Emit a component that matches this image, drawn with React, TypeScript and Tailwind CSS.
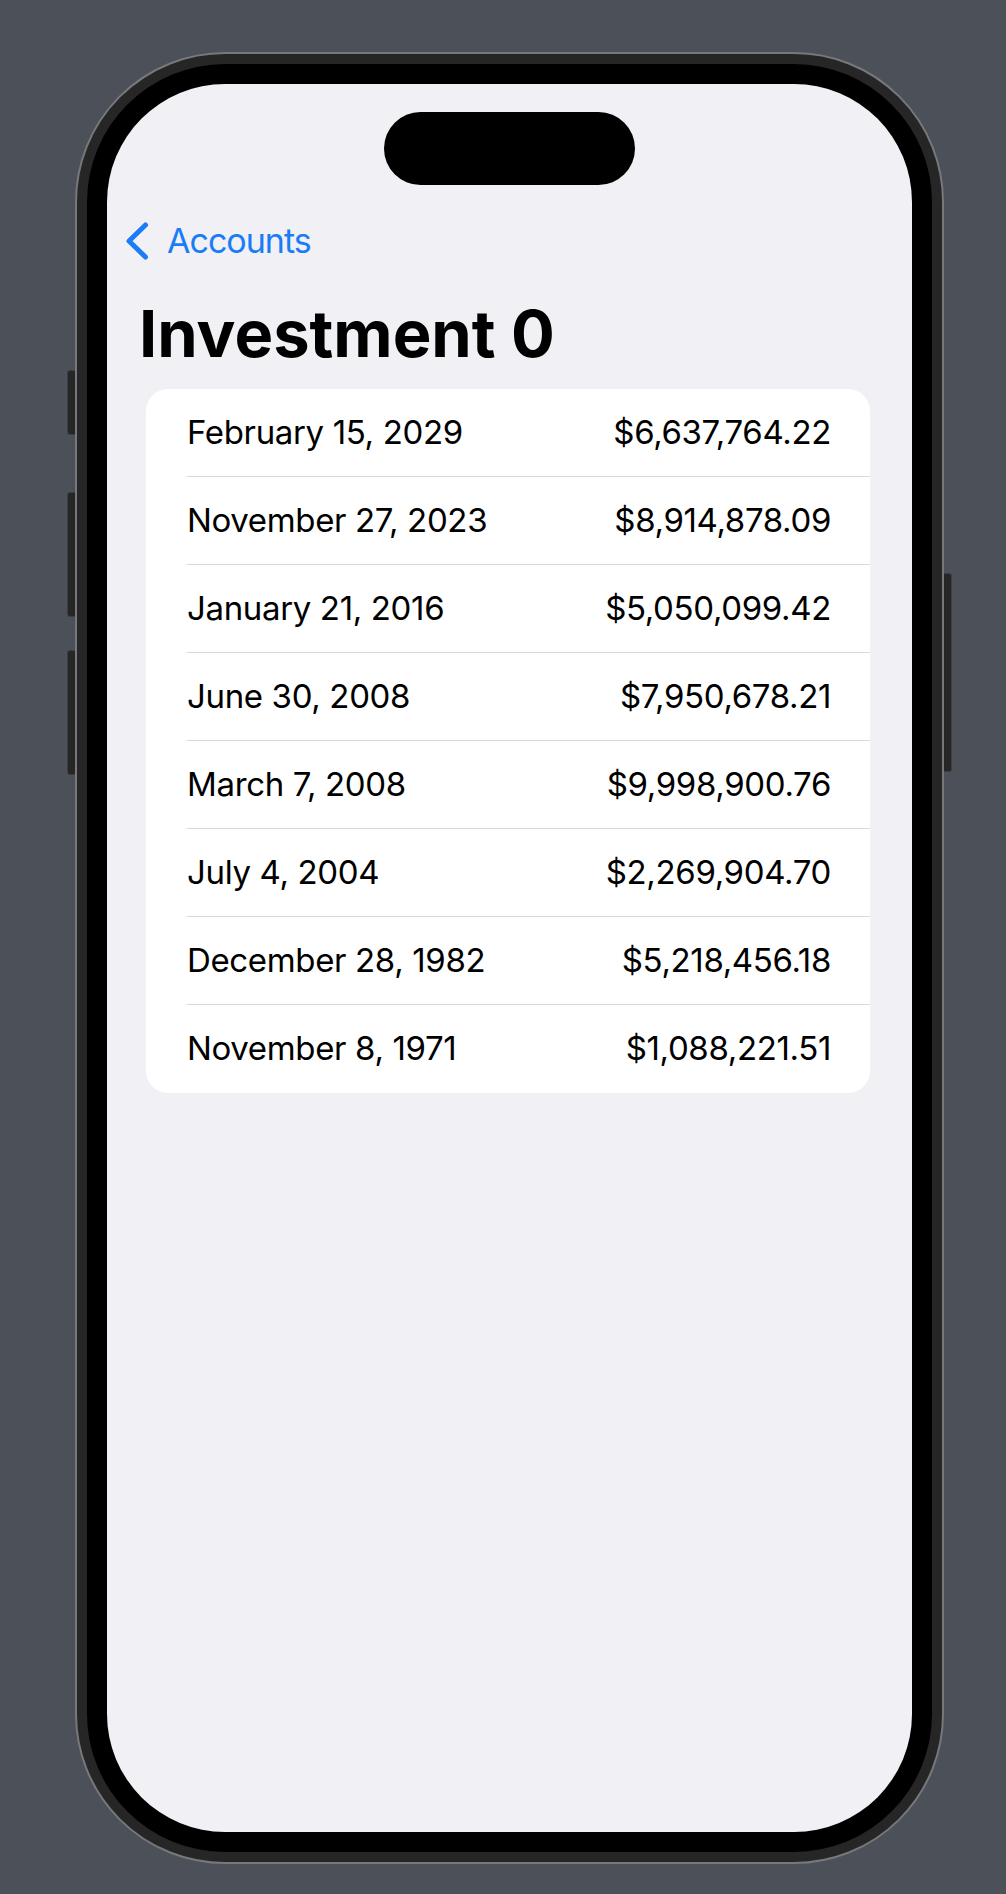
import React from "react";

const rows: [string, string][] = [
  ["February 15, 2029", "$6,637,764.22"],
  ["November 27, 2023", "$8,914,878.09"],
  ["January 21, 2016", "$5,050,099.42"],
  ["June 30, 2008", "$7,950,678.21"],
  ["March 7, 2008", "$9,998,900.76"],
  ["July 4, 2004", "$2,269,904.70"],
  ["December 28, 1982", "$5,218,456.18"],
  ["November 8, 1971", "$1,088,221.51"],
];

export default function App() {
  return (
    <div
      className="w-[1006px] h-[1894px] bg-[#4c5058] pt-[52px] pl-[75px]"
      style={{ fontFamily: "Inter, 'Noto Sans', sans-serif" }}
    >
      <div className="relative w-[869px] h-[1812px]">
        {/* side buttons */}
        <div className="absolute left-[-8px] top-[318px] w-[9px] h-[65px] rounded-l-[3px] bg-[#262626] border border-[#3c3e42]" />
        <div className="absolute left-[-8px] top-[440px] w-[9px] h-[125px] rounded-l-[3px] bg-[#262626] border border-[#3c3e42]" />
        <div className="absolute left-[-8px] top-[598px] w-[9px] h-[125px] rounded-l-[3px] bg-[#262626] border border-[#3c3e42]" />
        <div className="absolute right-[-8px] top-[521px] w-[9px] h-[199px] rounded-r-[3px] bg-[#262626] border border-[#3c3e42]" />

        <div className="relative w-full h-full rounded-[150px] border-2 border-[#77787b] bg-[#262626] p-[10px]">
          <div className="w-full h-full rounded-[138px] bg-black p-[20px]">
            <div className="w-full h-full rounded-[118px] bg-[#f0f0f5] overflow-hidden flex flex-col">
              {/* dynamic island */}
              <div className="mt-[28px] mx-auto w-[251px] h-[73px] rounded-full bg-black shrink-0" />

              {/* nav */}
              <div className="mt-[37px] h-[37px] flex items-center pl-[18px] shrink-0">
                <svg width="24" height="38" viewBox="0 0 24 38" fill="none">
                  <path
                    d="M20.5 3 L4 19 L20.5 35"
                    stroke="#1a7cf6"
                    strokeWidth="5"
                    strokeLinecap="round"
                    strokeLinejoin="round"
                  />
                </svg>
                <span className="ml-[18px] text-[34px] leading-none text-[#1a7cf6] tracking-[-1px]">
                  Accounts
                </span>
              </div>

              {/* title */}
              <div className="mt-[42px] pl-[32px] text-[65px] font-bold leading-none text-black shrink-0">
                Investment 0
              </div>

              {/* list */}
              <div className="mt-[23px] ml-[39px] w-[724px] bg-white rounded-[22px] overflow-hidden shrink-0">
                {rows.map(([d, a], i) => (
                  <div key={i} className="h-[88px] pl-[41px] flex">
                    <div
                      className={
                        "flex-1 flex items-center justify-between pr-[39px] text-[33px] tracking-[-0.35px] text-black " +
                        (i < rows.length - 1 ? "border-b border-[#d8d8dc]" : "")
                      }
                    >
                      <span>{d}</span>
                      <span>{a}</span>
                    </div>
                  </div>
                ))}
              </div>
            </div>
          </div>
        </div>
      </div>
    </div>
  );
}
